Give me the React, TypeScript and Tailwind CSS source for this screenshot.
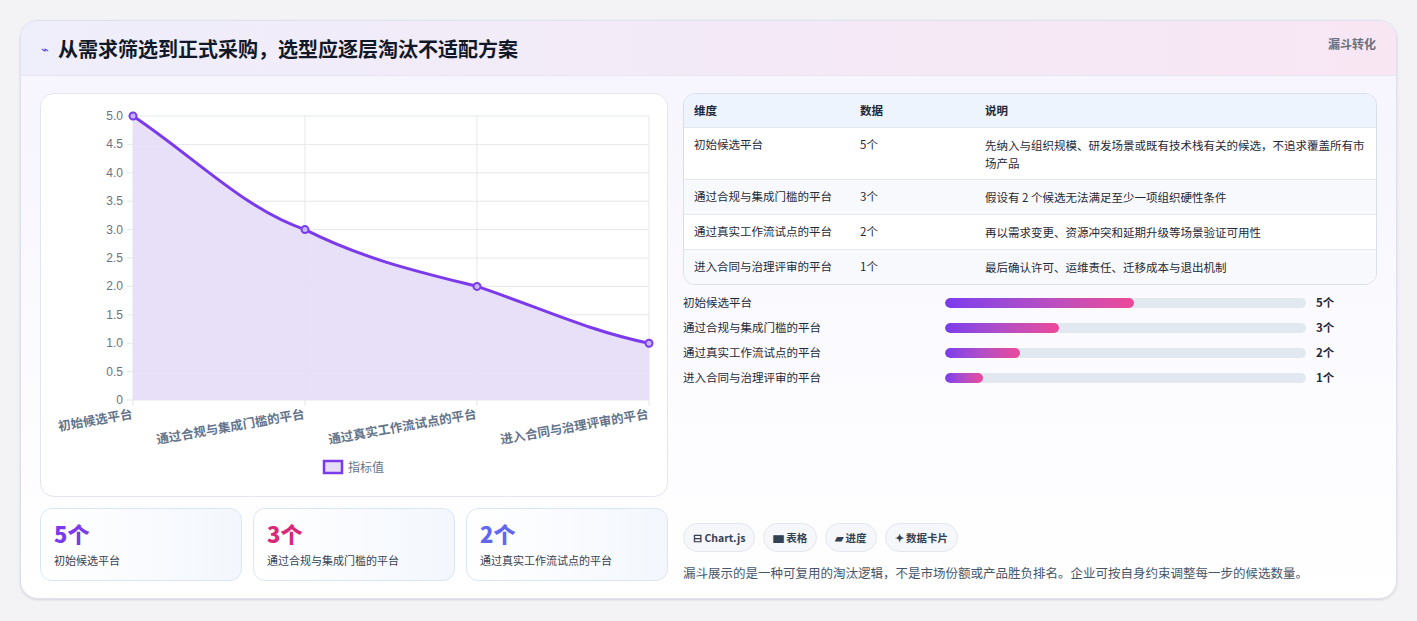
import React from "react";

const rows = [
  ["初始候选平台", "5个", "先纳入与组织规模、研发场景或既有技术栈有关的候选，不追求覆盖所有市场产品"],
  ["通过合规与集成门槛的平台", "3个", "假设有 2 个候选无法满足至少一项组织硬性条件"],
  ["通过真实工作流试点的平台", "2个", "再以需求变更、资源冲突和延期升级等场景验证可用性"],
  ["进入合同与治理评审的平台", "1个", "最后确认许可、运维责任、迁移成本与退出机制"],
];
const bars = [["初始候选平台", 52.3, "5个"], ["通过合规与集成门槛的平台", 31.5, "3个"], ["通过真实工作流试点的平台", 20.8, "2个"], ["进入合同与治理评审的平台", 10.5, "1个"]] as const;

function Chart() {
  const x0 = 92, x1 = 608, yTop = 22, yBot = 306;
  const ys = (v: number) => yBot - (v / 5) * (yBot - yTop);
  const xs = [92, 264, 436, 608];
  const vals = [5, 3, 2, 1];
  const p = xs.map((x, i) => [x, ys(vals[i])]);
  const line = `M${p[0][0]},${p[0][1]} C${p[0][0] + 60},${p[0][1] + 40} ${p[1][0] - 60},${p[1][1] - 20} ${p[1][0]},${p[1][1]} C${p[1][0] + 60},${p[1][1] + 30} ${p[2][0] - 60},${p[2][1] - 15} ${p[2][0]},${p[2][1]} C${p[2][0] + 60},${p[2][1] + 20} ${p[3][0] - 60},${p[3][1] - 12} ${p[3][0]},${p[3][1]}`;
  const ticks = [0, 0.5, 1, 1.5, 2, 2.5, 3, 3.5, 4, 4.5, 5];
  const labels = ["初始候选平台", "通过合规与集成门槛的平台", "通过真实工作流试点的平台", "进入合同与治理评审的平台"];
  return (
    <svg width="626" height="401" style={{ fontFamily: "'Liberation Sans','Noto Sans CJK SC',sans-serif" }}>
      {ticks.map((t) => (
        <g key={t}>
          <line x1={x0 - 6} x2={x1} y1={ys(t)} y2={ys(t)} stroke="#e5e7eb" />
          <text x={x0 - 10} y={ys(t) + 4} fontSize="12" fill="#6b7280" textAnchor="end">{t === 0 ? "0" : t.toFixed(1)}</text>
        </g>
      ))}
      {xs.map((x) => <line key={x} x1={x} x2={x} y1={yTop} y2={yBot + 6} stroke="#e5e7eb" />)}
      <path d={`${line} L${x1},${yBot} L${x0},${yBot} Z`} fill="#e6dcf8" fillOpacity="0.9" />
      <path d={line} fill="none" stroke="#7c3aed" strokeWidth="3" />
      {p.map(([x, y], i) => <circle key={i} cx={x} cy={y} r="3.5" fill="#c4b5fd" stroke="#7c3aed" strokeWidth="2" />)}
      {labels.map((l, i) => (
        <text key={l} x={xs[i]} y={yBot + 18} fontSize="12.5" fontWeight="bold" fill="#64748b" textAnchor="end" transform={`rotate(-10 ${xs[i]} ${yBot + 18})`}>{l}</text>
      ))}
      <rect x="283" y="367" width="18" height="12" fill="#e6dcf8" stroke="#7c3aed" strokeWidth="2.5" />
      <text x="307" y="378" fontSize="12" fill="#64748b">指标值</text>
    </svg>
  );
}

export default function App() {
  return (
    <div className="w-[1417px] h-[621px] bg-[#f3f3f5] pt-[20px] pl-[20px]" style={{ fontFamily: "'Noto Sans CJK SC',sans-serif" }}>
      <div className="w-[1377px] h-[579px] rounded-[18px] border border-[#dde0ef] bg-gradient-to-b from-[#f6f4fd] to-white overflow-hidden shadow-sm">
        <div className="h-[55px] bg-gradient-to-r from-[#efeefb] to-[#f8e6f3] border-b border-[#e8e4f4] flex items-start justify-between px-[20px]">
          <div className="flex items-center gap-[9px] mt-[13px]">
            <span className="text-[#4f46e5] text-[13px]">⌁</span>
            <span className="text-[20px] font-bold text-[#111827]">从需求筛选到正式采购，选型应逐层淘汰不适配方案</span>
          </div>
          <span className="mt-[14px] text-[12px] font-bold text-[#6b7280]">漏斗转化</span>
        </div>
        <div className="flex gap-[15px] px-[19px] pt-[17px]">
          <div className="w-[628px] flex flex-col gap-[11px]">
            <div className="h-[404px] rounded-[14px] border border-[#e3e6ef] bg-white overflow-hidden"><Chart /></div>
            <div className="flex gap-[11px]">
              {[["5个", "text-[#7c3aed]", "初始候选平台"], ["3个", "text-[#db2777]", "通过合规与集成门槛的平台"], ["2个", "text-[#6366f1]", "通过真实工作流试点的平台"]].map(([n, c, l]) => (
                <div key={l} className="w-[202px] h-[73px] rounded-[12px] border border-[#dbe6f5] bg-gradient-to-r from-white to-[#f3f7fd] px-[13px] pt-[9px]">
                  <div className={`text-[22px] font-extrabold leading-[30px] ${c}`}>{n}</div>
                  <div className="text-[11px] text-[#374151] mt-[4px]">{l}</div>
                </div>
              ))}
            </div>
          </div>
          <div className="w-[695px] flex flex-col">
            <div className="rounded-[12px] border border-[#d9dee8] overflow-hidden text-[11.5px] text-[#1f2937]">
              <div className="flex bg-[#eef4fd] h-[33px] items-center font-bold text-[#1e293b]">
                <div className="w-[176px] pl-[10px]">维度</div><div className="w-[125px]">数据</div><div className="flex-1">说明</div>
              </div>
              {rows.map((r, i) => (
                <div key={i} className={`flex border-t border-[#e5e7eb] ${i % 2 ? "bg-[#f8f9fc]" : "bg-white"} ${i === 0 ? "pt-[8px] pb-[7px]" : "h-[35px] items-center"}`}>
                  <div className="w-[176px] pl-[10px]">{r[0]}</div><div className="w-[125px]">{r[1]}</div><div className="flex-1 pr-[8px] leading-[18px]">{r[2]}</div>
                </div>
              ))}
            </div>
            <div className="flex flex-col gap-[9px] mt-[10px]">
              {bars.map(([l, w, v]) => (
                <div key={l} className="flex items-center h-[16px] text-[11.5px] text-[#1f2937]">
                  <div className="w-[262px]">{l}</div>
                  <div className="w-[361px] h-[10px] rounded-full bg-[#e2e8f0] overflow-hidden">
                    <div className="h-full rounded-full bg-gradient-to-r from-[#7c3aed] to-[#ec4899]" style={{ width: `${w}%` }} />
                  </div>
                  <div className="ml-[10px] font-bold">{v}</div>
                </div>
              ))}
            </div>
            <div className="flex gap-[8px] mt-[137px]">
              {["⊟ Chart.js", "▆ 表格", "▰ 进度", "✦ 数据卡片"].map((t) => (
                <span key={t} className="h-[29px] px-[9px] rounded-full border border-[#e3e6ee] bg-[#f6f7fa] text-[10.5px] font-bold text-[#334155] flex items-center">{t}</span>
              ))}
            </div>
            <div className="mt-[12px] text-[12.5px] text-[#475569]">漏斗展示的是一种可复用的淘汰逻辑，不是市场份额或产品胜负排名。企业可按自身约束调整每一步的候选数量。</div>
          </div>
        </div>
      </div>
    </div>
  );
}
